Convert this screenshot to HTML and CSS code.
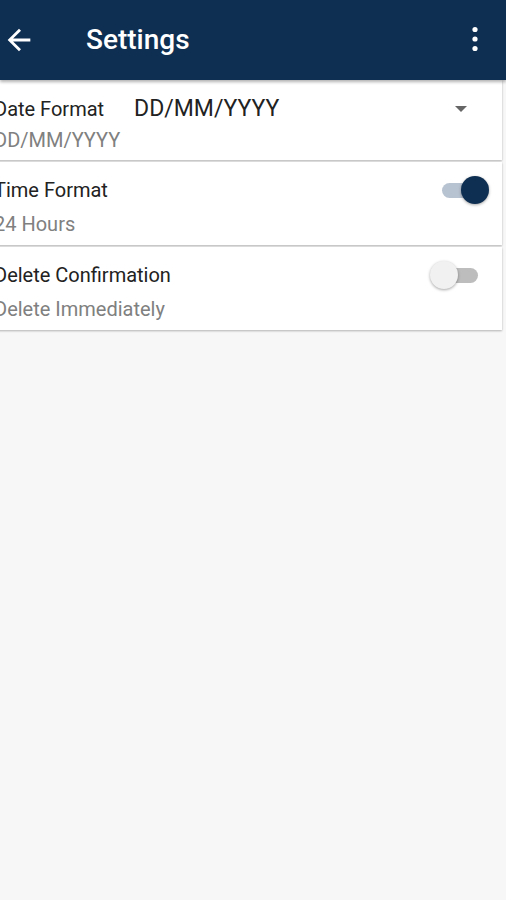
FILE: index.html
```html
<!DOCTYPE html>
<html lang="en">
<head>
  <meta charset="UTF-8" />
  <meta name="viewport" content="width=device-width, initial-scale=1.0"/>
  <title>Settings</title>
  <link rel="stylesheet" href="styles.css">
</head>
<body>

<header class="appbar">
  <svg class="appbar-back" viewBox="0 0 24 24">
    <path d="M20 11H7.83l5.59-5.59L12 4l-8 8 8 8 1.41-1.41L7.83 13H20v-2z" fill="#fff"/>
  </svg>
  <h1 class="appbar-title">Settings</h1>
  <svg class="appbar-more" viewBox="0 0 10 30">
    <circle cx="5" cy="5.5" r="2.6" fill="#fff"/>
    <circle cx="5" cy="15" r="2.6" fill="#fff"/>
    <circle cx="5" cy="24.5" r="2.6" fill="#fff"/>
  </svg>
</header>

<main class="list">
  <!-- date format: label + spinner on one line -->
  <section class="card card-first">
    <div class="row">
      <span class="label">Date Format</span>
      <span class="spinner-value">DD/MM/YYYY</span>
      <span class="spinner-arrow"></span>
    </div>
    <div class="sub sub-tight">DD/MM/YYYY</div>
  </section>

  <section class="card">
    <div class="row">
      <span class="label">Time Format</span>
      <span class="switch on"><span class="thumb"></span></span>
    </div>
    <div class="sub">24 Hours</div>
  </section>

  <section class="card">
    <div class="row">
      <span class="label">Delete Confirmation</span>
      <span class="switch"><span class="thumb"></span></span>
    </div>
    <div class="sub">Delete Immediately</div>
  </section>
</main>

</body>
</html>
```

FILE: styles.css
```css
:root {
  --navy:#0f2f52; --bg:#f7f7f7; --text:#222; --muted:#808080;
}
body{margin:0;background:var(--bg);color:var(--text);
     font-family:Roboto,"Noto Sans",sans-serif;width:506px;height:900px;overflow:hidden}

.appbar{height:80px;background:var(--navy);display:flex;align-items:center;
        padding:0 26px 0 2px;box-shadow:0 2px 3px rgba(0,0,0,.3);position:relative;z-index:1}
.appbar-back{width:34px;height:34px}
.appbar-title{margin:0 0 0 50px;flex:1;color:#fff;font-size:28px;font-weight:500;line-height:34px}
.appbar-more{width:10px;height:30px;margin-top:-2px}

.list{display:flex;flex-direction:column;gap:2px;margin-left:-8px;width:510px}
.card{background:#fff;box-shadow:0 1px 2px rgba(0,0,0,.28);height:83px;box-sizing:border-box;
      padding:14px 12px 0 2px}
.card-first{height:80px;padding-top:15px}
.row{display:flex;align-items:center;height:28px}
.label{font-size:20px;line-height:24px;color:#222;flex:0 0 auto}
.sub{font-size:20px;line-height:24px;color:var(--muted);margin-top:8px}
.sub-tight{margin-top:5px}

.spinner-value{font-size:23px;line-height:28px;color:#222;margin-left:30px;flex:1}
.spinner-arrow{width:0;height:0;border-left:6px solid transparent;border-right:6px solid transparent;
               border-top:6px solid #666;margin-right:23px}

.switch{margin-left:auto;position:relative;width:36px;height:15px;border-radius:8px;
        background:#bdbdbd;margin-right:12px}
.switch .thumb{position:absolute;top:-7px;left:-12px;width:28px;height:28px;border-radius:50%;
               background:#f1f1f1;box-shadow:0 1px 3px rgba(0,0,0,.35)}
.switch.on{background:#b8c3d1;width:38px;margin-right:10px}
.switch.on .thumb{left:auto;right:-9px;background:var(--navy)}
```
